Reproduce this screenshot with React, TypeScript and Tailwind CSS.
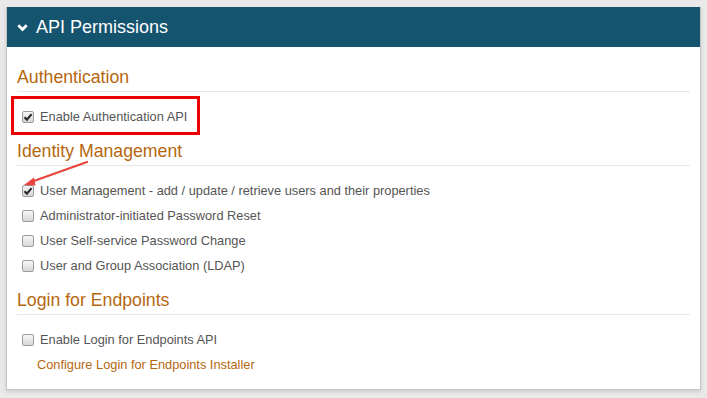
import React from "react";

function Box({ checked }: { checked?: boolean }) {
  return (
    <span className="relative inline-block w-[12px] h-[12px] shrink-0 rounded-[2px] border border-[#9c9c9c] bg-gradient-to-b from-[#f6f6f6] to-[#d8d8d8]">
      {checked && (
        <svg viewBox="0 0 12 12" className="absolute left-[-1px] top-[-1px] w-[12px] h-[12px]">
          <path d="M2.5 6.2 L4.9 8.6 L9.6 3.1" fill="none" stroke="#2b2b2b" strokeWidth="2.2" strokeLinecap="butt" strokeLinejoin="miter" />
        </svg>
      )}
    </span>
  );
}

function Row({ label, checked }: { label: string; checked?: boolean }) {
  return (
    <div className="flex h-[25px] items-center pl-[5px] gap-[6px] text-[12.8px] text-[#555555]">
      <Box checked={checked} />
      <span>{label}</span>
    </div>
  );
}

function Heading({ children, first }: { children: React.ReactNode; first?: boolean }) {
  return (
    <div className={`${first ? "mt-[20px]" : "mt-[12px]"} border-b border-[#e6e6e6] pb-[4px] mb-[12px]`}>
      <div className="h-[20px] leading-[20px] text-[17.7px] text-[#b5670f]">{children}</div>
    </div>
  );
}

export default function App() {
  return (
    <div className="w-[707px] h-[398px] bg-[#e9e9e9] pt-[7px] pl-[6px]" style={{ fontFamily: '"Liberation Sans", Arial, sans-serif' }}>
      <div className="relative w-[695px] bg-white border-x border-b border-[#c4c4c4] shadow-[0_2px_4px_rgba(0,0,0,0.12)]">
        <div className="h-[40px] bg-[#14546f] flex items-center pl-[10px] text-white">
          <svg viewBox="0 0 11 8" className="w-[11px] h-[8px] mr-[8px] mt-[1px]">
            <path d="M1.3 1.3 L5.5 5.5 L9.7 1.3" fill="none" stroke="#ffffff" strokeWidth="2.8" />
          </svg>
          <span className="text-[18px] leading-[20px]">API Permissions</span>
        </div>
        <div className="px-[10px] pb-[12px]">
          <Heading first>Authentication</Heading>
          <Row label="Enable Authentication API" checked />
          <Heading>Identity Management</Heading>
          <Row label="User Management - add / update / retrieve users and their properties" checked />
          <Row label="Administrator-initiated Password Reset" />
          <Row label="User Self-service Password Change" />
          <Row label="User and Group Association (LDAP)" />
          <Heading>Login for Endpoints</Heading>
          <Row label="Enable Login for Endpoints API" />
          <div className="h-[25px] flex items-center pl-[20px] text-[12.8px] text-[#b5670f]">Configure Login for Endpoints Installer</div>
        </div>
        <div className="absolute left-[4px] top-[89px] w-[189px] h-[39px] border-[3px] border-[#ee0000] pointer-events-none" />
        <svg className="absolute left-0 top-0 pointer-events-none" width="695" height="390">
          <line x1="80" y1="155" x2="24" y2="175" stroke="#e8443c" strokeWidth="2.2" strokeLinecap="round" />
          <path d="M17 178 L27 170.5 L28.5 178.5 Z" fill="#e8443c" />
        </svg>
      </div>
    </div>
  );
}
